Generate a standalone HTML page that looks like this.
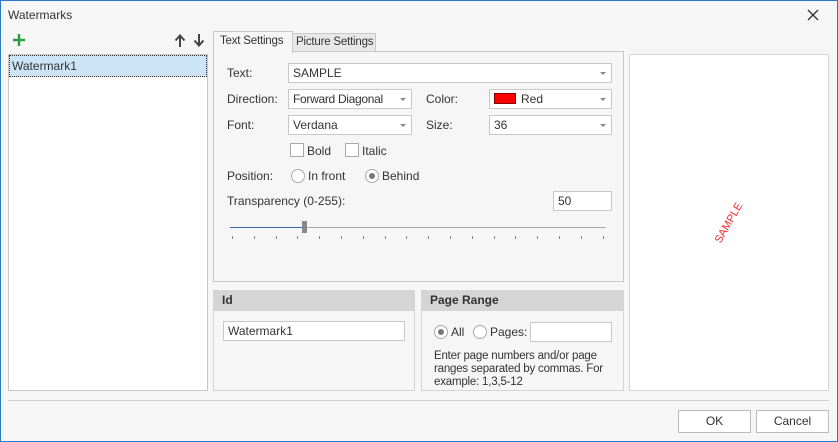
<!DOCTYPE html><html><head><style>
*{box-sizing:border-box}
body{margin:0;width:838px;height:442px;overflow:hidden;font-family:"Liberation Sans",sans-serif;font-size:12px;color:#333}
#w{position:absolute;left:0;top:0;width:838px;height:442px;background:#f6f6f6}
#bd{position:absolute;left:0;top:0;width:838px;height:442px;border:1px solid #2b79c9;pointer-events:none}
.a{position:absolute;white-space:nowrap}
.in{position:absolute;background:#fff;border:1px solid #c8c8c8;padding:3px 4px;font-size:12px;line-height:12px;white-space:nowrap}
.dd::after{content:"";position:absolute;right:5px;top:8px;border-left:3px solid transparent;border-right:3px solid transparent;border-top:3px solid #888}
.cb{position:absolute;width:14px;height:14px;border:1px solid #aaa;background:#fff}
.rb{position:absolute;width:14px;height:14px;border:1px solid #aaa;border-radius:50%;background:#fff}
.rb.on::after{content:"";position:absolute;left:3px;top:3px;width:6px;height:6px;border-radius:50%;background:#777}
.tk{position:absolute;top:236px;width:1px;height:3px;background:#888}
</style></head><body><div id="w">
<div class="a" style="left:8px;top:8px;font-size:12px">Watermarks</div>
<svg class="a" style="left:806px;top:8px" width="14" height="14"><path d="M2 2L12 12M12 2L2 12" stroke="#333" stroke-width="1.3"/></svg>
<svg class="a" style="left:12px;top:33px" width="14" height="14"><path d="M7 1V13M1 7H13" stroke="#2e9b3e" stroke-width="2.4"/></svg>
<svg class="a" style="left:174px;top:34px" width="12" height="13"><path d="M6 13V3M1.5 6.5L6 1.5 10.5 6.5" stroke="#444" stroke-width="2" fill="none"/></svg>
<svg class="a" style="left:193px;top:34px" width="12" height="13"><path d="M6 0V10M1.5 6.5L6 11.5 10.5 6.5" stroke="#444" stroke-width="2" fill="none"/></svg>
<div class="a" style="left:8px;top:54px;width:200px;height:337px;background:#fff;border:1px solid #c8c8c8"></div>
<div class="a" style="left:9px;top:55px;width:198px;height:22px;background:#cde4f7;border:1px dotted #333;padding:3px 2px">Watermark1</div>
<div class="a" style="left:292px;top:33px;width:84px;height:19px;background:#e8e8e8;border:1px solid #c8c8c8;padding:2px 3px;font-size:11.5px;letter-spacing:-0.2px">Picture Settings</div>
<div class="a" style="left:213px;top:51px;width:411px;height:231px;border:1px solid #c8c8c8;background:#f6f6f6"></div>
<div class="a" style="left:213px;top:31px;width:80px;height:22px;background:#f6f6f6;border:1px solid #c8c8c8;border-bottom:none;padding:3px 6px;font-size:11.5px;letter-spacing:-0.2px">Text Settings</div>
<div class="a" style="left:227px;top:66px">Text:</div>
<div class="in dd" style="left:288px;top:63px;width:324px;height:20px">SAMPLE</div>
<div class="a" style="left:227px;top:92px">Direction:</div>
<div class="in dd" style="left:288px;top:89px;width:124px;height:20px;letter-spacing:-0.3px">Forward Diagonal</div>
<div class="a" style="left:426px;top:92px">Color:</div>
<div class="in dd" style="left:489px;top:89px;width:123px;height:20px"><span style="display:inline-block;width:22px;height:11px;background:#f00;border:1px solid #800;vertical-align:-1px;margin-right:5px"></span>Red</div>
<div class="a" style="left:227px;top:118px">Font:</div>
<div class="in dd" style="left:288px;top:115px;width:124px;height:20px">Verdana</div>
<div class="a" style="left:426px;top:118px">Size:</div>
<div class="in dd" style="left:489px;top:115px;width:123px;height:20px">36</div>
<div class="cb" style="left:290px;top:143px"></div><div class="a" style="left:307px;top:144px">Bold</div>
<div class="cb" style="left:345px;top:143px"></div><div class="a" style="left:362px;top:144px">Italic</div>
<div class="a" style="left:227px;top:169px">Position:</div>
<div class="rb" style="left:291px;top:169px"></div><div class="a" style="left:308px;top:169px">In front</div>
<div class="rb on" style="left:365px;top:169px"></div><div class="a" style="left:382px;top:169px">Behind</div>
<div class="a" style="left:227px;top:194px">Transparency (0-255):</div>
<div class="in" style="left:553px;top:191px;width:59px;height:20px">50</div>
<div class="a" style="left:230px;top:227px;width:376px;height:1px;background:#aaa"></div>
<div class="a" style="left:230px;top:227px;width:74px;height:1px;background:#2b6cb0"></div>
<div class="a" style="left:302px;top:221px;width:5px;height:12px;background:#888"></div>
<div class="tk" style="left:232px"></div><div class="tk" style="left:254px"></div><div class="tk" style="left:276px"></div><div class="tk" style="left:297px"></div><div class="tk" style="left:319px"></div><div class="tk" style="left:341px"></div><div class="tk" style="left:363px"></div><div class="tk" style="left:385px"></div><div class="tk" style="left:406px"></div><div class="tk" style="left:428px"></div><div class="tk" style="left:450px"></div><div class="tk" style="left:472px"></div><div class="tk" style="left:494px"></div><div class="tk" style="left:515px"></div><div class="tk" style="left:537px"></div><div class="tk" style="left:559px"></div><div class="tk" style="left:581px"></div><div class="tk" style="left:603px"></div>
<div class="a" style="left:213px;top:290px;width:202px;height:101px;border:1px solid #d5d5d5"></div>
<div class="a" style="left:213px;top:290px;width:202px;height:21px;background:#d5d5d5;font-weight:bold;padding:3px 9px">Id</div>
<div class="in" style="left:223px;top:321px;width:182px;height:20px">Watermark1</div>
<div class="a" style="left:421px;top:290px;width:203px;height:101px;border:1px solid #d5d5d5"></div>
<div class="a" style="left:421px;top:290px;width:203px;height:21px;background:#d5d5d5;font-weight:bold;padding:3px 9px">Page Range</div>
<div class="rb on" style="left:434px;top:325px"></div><div class="a" style="left:451px;top:325px">All</div>
<div class="rb" style="left:473px;top:325px"></div><div class="a" style="left:490px;top:325px">Pages:</div>
<div class="in" style="left:530px;top:322px;width:82px;height:20px"></div>
<div class="a" style="left:434px;top:350px;line-height:13px;width:185px;white-space:normal;font-size:11.5px;letter-spacing:-0.2px">Enter page numbers and/or page ranges separated by commas. For example: 1,3,5-12</div>
<div class="a" style="left:629px;top:54px;width:200px;height:337px;background:#fff;border:1px solid #d5d5d5"></div>
<div class="a" style="left:729px;top:223px;color:#f03030;font-size:11px;transform:translate(-50%,-50%) rotate(-60deg)">SAMPLE</div>
<div class="a" style="left:8px;top:400px;width:821px;height:1px;background:#d0d0d0"></div>
<div class="a" style="left:678px;top:410px;width:73px;height:23px;border:1px solid #bbb;background:#fff;text-align:center;line-height:21px">OK</div>
<div class="a" style="left:756px;top:410px;width:73px;height:23px;border:1px solid #bbb;background:#fff;text-align:center;line-height:21px">Cancel</div>
</div><div id="bd"></div></body></html>
